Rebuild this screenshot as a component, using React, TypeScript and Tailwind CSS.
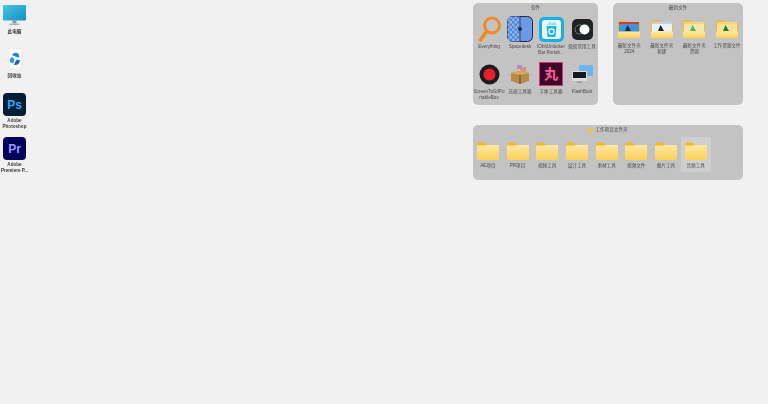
import React from 'react';

const font = { fontFamily: '"Liberation Sans", "Noto Sans CJK SC", sans-serif' };

const Label: React.FC<{ children: React.ReactNode; dark?: boolean }> = ({ children, dark }) => (
  <div className={`w-full text-center whitespace-nowrap overflow-hidden text-[4.6px] leading-[6px] blur-[0.35px] ${dark ? 'text-[#3a3a3a] font-bold' : 'text-[#4a4a4a]'}`}>
    {children}
  </div>
);

const Folder: React.FC<{ inner?: React.ReactNode }> = ({ inner }) => (
  <svg viewBox="0 0 22 18" className="w-[22px] h-[18px]">
    <path d="M0 3 Q0 0.5 2 0.5 H7 Q8 0.5 9 2 L10 3 H22 V17 Q22 18 21 18 H1 Q0 18 0 17 Z" fill="#f2b52c" />
    {inner}
    <path d="M0 3.5 H8 L10 3 H22 V17 Q22 18 21 18 H1 Q0 18 0 17 Z" fill="url(#folderFill)" opacity={inner ? 0 : 1} />
    {inner && <path d="M0 11.5 H22 V17 Q22 18 21 18 H1 Q0 18 0 17 Z" fill="url(#folderFill)" />}
  </svg>
);

const Cell: React.FC<{ icon: React.ReactNode; label: React.ReactNode; className: string }> = ({ icon, label, className }) => (
  <div className={`flex flex-col items-center ${className}`}>
    <div className="h-[26px] flex items-center justify-center">{icon}</div>
    <div className="mt-[2px] w-full">
      <Label>{label}</Label>
    </div>
  </div>
);

const Monitor = () => (
  <svg viewBox="0 0 23 21" className="w-[23px] h-[21px]">
    <defs>
      <linearGradient id="screen" x1="0" y1="0" x2="1" y2="1">
        <stop offset="0" stopColor="#45c8e0" />
        <stop offset="1" stopColor="#1a8cc4" />
      </linearGradient>
    </defs>
    <rect x="0" y="0" width="23" height="15.5" rx="1" fill="url(#screen)" />
    <rect x="9.5" y="15.5" width="4" height="3" fill="#8a97a0" />
    <rect x="6.5" y="18.5" width="10" height="1.5" rx="0.5" fill="#a7b0b6" />
  </svg>
);

const Recycle = () => (
  <svg viewBox="0 0 18 23" className="w-[18px] h-[23px]">
    <path d="M2 2 L5 1 L16 2 L16 21 Q16 22 15 22 H4 Q3 22 3 21 Z" fill="#f8f8f8" stroke="#dedede" strokeWidth="0.5" />
    <path d="M6 8 Q9 4 12.5 7 L13.5 10.5 L10.5 10 Z" fill="#1f86d8" />
    <path d="M4 15 Q3.5 11 6 10 L8.5 12.5 L7 16.5 Z" fill="#2a95e2" />
    <path d="M8 18 Q13 18.5 14 13.5 L11 12.5 L9 15.5 Z" fill="#1565b8" />
  </svg>
);

const AdobeIcon: React.FC<{ bg: string; fg: string; text: string }> = ({ bg, fg, text }) => (
  <div
    className="w-[23px] h-[23px] rounded-[4px] flex items-center justify-center text-[12px] font-bold leading-none"
    style={{ backgroundColor: bg, color: fg }}
  >
    {text}
  </div>
);

const Magnifier = () => (
  <svg viewBox="0 0 23 27" className="w-[23px] h-[27px]">
    <circle cx="14" cy="9.5" r="7.5" fill="none" stroke="#f08a24" strokeWidth="3" />
    <path d="M8.5 15.5 L2.5 24" stroke="#f08a24" strokeWidth="3.8" strokeLinecap="round" />
  </svg>
);

const SplitIcon = () => (
  <svg viewBox="0 0 26 26" className="w-[26px] h-[26px]">
    <defs>
      <pattern id="check" width="5" height="5" patternUnits="userSpaceOnUse">
        <rect width="5" height="5" fill="#8fb4ea" />
        <rect width="2.5" height="2.5" fill="#4f86d8" />
        <rect x="2.5" y="2.5" width="2.5" height="2.5" fill="#4f86d8" />
      </pattern>
    </defs>
    <rect x="0.5" y="0.5" width="25" height="25" rx="5" fill="#6b9be6" stroke="#1f2a44" />
    <path d="M5.5 0.5 H13 V25.5 H5.5 Q0.5 25.5 0.5 20.5 V5.5 Q0.5 0.5 5.5 0.5 Z" fill="url(#check)" />
    <rect x="12.6" y="0.5" width="0.8" height="25" fill="#1f2a44" />
    <circle cx="13" cy="13" r="2" fill="#1f2a44" />
  </svg>
);

const TrashApp = () => (
  <svg viewBox="0 0 25 25" className="w-[25px] h-[25px]">
    <rect width="25" height="25" rx="5" fill="#18aee6" />
    <rect x="3" y="3" width="19" height="19" rx="3" fill="#eaf8fd" />
    <path d="M7.5 9 H17.5 L16.5 20 H8.5 Z" fill="#22b4e8" />
    <path d="M8 8 L11 4.5 L13 6.5 L16 4.5 L17.5 8 Z" fill="#8edff5" />
    <circle cx="12.5" cy="14.5" r="2.6" fill="none" stroke="#fff" strokeWidth="1.1" />
  </svg>
);

const ToggleApp = () => (
  <svg viewBox="0 0 21 21" className="w-[21px] h-[21px]">
    <rect width="21" height="21" rx="5" fill="#1d2322" />
    <circle cx="7.5" cy="10.5" r="4.5" fill="none" stroke="#d8dcdc" strokeWidth="0.8" strokeDasharray="1 0.8" />
    <circle cx="12.5" cy="10.5" r="5" fill="#fff" />
  </svg>
);

const RecordApp = () => (
  <svg viewBox="0 0 21 21" className="w-[21px] h-[21px]">
    <circle cx="10.5" cy="10.5" r="10" fill="#1c1a1c" />
    <circle cx="10.5" cy="10.5" r="6" fill="#e8202a" />
  </svg>
);

const BoxApp = () => (
  <svg viewBox="0 0 20 20" className="w-[20px] h-[20px]">
    <rect x="7" y="1" width="5" height="5" fill="#b48ad0" />
    <rect x="11" y="3" width="5" height="5" fill="#d09a80" />
    <rect x="5" y="5" width="5" height="4" fill="#e0c090" />
    <path d="M1 9 L10 7 L19 9 V17 L10 20 L1 17 Z" fill="#b98a45" />
    <path d="M1 9 L10 11 L19 9 L10 7 Z" fill="#d6aa60" />
    <rect x="9" y="11" width="2" height="9" fill="#7a6a4a" />
  </svg>
);

const MonitorsApp = () => (
  <svg viewBox="0 0 21 20" className="w-[21px] h-[20px]">
    <rect x="7" y="1" width="14" height="11" rx="1.5" fill="#6eb4ec" />
    <rect x="0" y="7" width="15" height="10" rx="1" fill="#d8dde2" />
    <rect x="1" y="8" width="13" height="6" fill="#16181c" />
    <rect x="5" y="17" width="5" height="2" fill="#9aa3aa" />
  </svg>
);

const Panel: React.FC<{ title: React.ReactNode; className: string; children: React.ReactNode }> = ({ title, className, children }) => (
  <div className={`bg-[#c3c3c3] rounded-[5px] ${className}`}>
    <div className="h-[11px] flex items-center justify-center gap-[2px] text-[4.6px] text-[#4a4a4a] blur-[0.35px]">{title}</div>
    {children}
  </div>
);

const tools = [
  { icon: <Magnifier />, label: 'Everything' },
  { icon: <SplitIcon />, label: 'Spacedesk' },
  { icon: <TrashApp />, label: <>IObitUnlocker<br />Bar Portab...</> },
  { icon: <ToggleApp />, label: '微软常用工具' },
  { icon: <RecordApp />, label: <>ScreenToGifPo<br />rtableBox</> },
  { icon: <BoxApp />, label: '压缩工具箱' },
  { icon: <div className="w-[24px] h-[24px] bg-[#3c0a26] border border-[#e0307a] flex items-center justify-center text-[#ff5c9e] text-[14px] font-bold leading-none">丸</div>, label: '字体工具箱' },
  { icon: <MonitorsApp />, label: 'FlashBoot' },
];

const thumb = (colors: string[], mark: string) => (
  <g>
    <rect x="1" y="2" width="20" height="11" fill={colors[0]} />
    <rect x="1" y="2" width="20" height="2" fill={colors[1]} />
    <path d="M7 11 L9.5 5 L13 11 Z" fill={mark} />
  </g>
);

const recent = [
  { inner: thumb(['#3f95d8', '#c8402c'], '#1f2a44'), label: <>最新文件夹<br />2024</> },
  { inner: thumb(['#eef0f6', '#c9cfe8'], '#222222'), label: <>最新文件夹<br />新建</> },
  { inner: thumb(['#f6e7a8', '#f3d76f'], '#4fb36a'), label: <>最新文件夹<br />资源</> },
  { inner: thumb(['#f7e296', '#f3d76f'], '#1f7a3c'), label: '工作资源文件' },
];

const projects = ['AE项目', 'PR项目', '视频工具', '设计工具', '素材工具', '视频文件', '图片工具', '音频工具'];

export default function App() {
  return (
    <div className="w-[768px] h-[404px] bg-[#f1f1f1] overflow-hidden flex justify-between" style={font}>
      <svg width="0" height="0" className="absolute">
        <defs>
          <linearGradient id="folderFill" x1="0" y1="0" x2="0" y2="1">
            <stop offset="0" stopColor="#fde8a0" />
            <stop offset="1" stopColor="#fbcf58" />
          </linearGradient>
        </defs>
      </svg>

      {/* desktop shortcuts */}
      <div className="w-[29px] flex flex-col items-center pt-[5px]">
        <div className="h-[44px] w-full flex flex-col items-center">
          <Monitor />
          <div className="mt-[3px] w-full"><Label dark>此电脑</Label></div>
        </div>
        <div className="h-[44px] w-full flex flex-col items-center -mt-[2px]">
          <Recycle />
          <div className="mt-[3px] w-full"><Label dark>回收站</Label></div>
        </div>
        <div className="h-[44px] w-full flex flex-col items-center mt-[2px]">
          <AdobeIcon bg="#001e36" fg="#31a8ff" text="Ps" />
          <div className="mt-[2px] w-full"><Label dark>Adobe<br />Photoshop</Label></div>
        </div>
        <div className="h-[44px] w-full flex flex-col items-center">
          <AdobeIcon bg="#00005b" fg="#9999ff" text="Pr" />
          <div className="mt-[2px] w-full"><Label dark>Adobe<br />Premiere P...</Label></div>
        </div>
      </div>

      {/* folder groups */}
      <div className="w-[295px] pt-[3px] pr-[25px] flex flex-col gap-[20px]">
        <div className="flex justify-between">
          <Panel title="软件" className="w-[125px] h-[102px]">
            <div className="grid grid-cols-[repeat(4,31px)] pt-[2px] pl-[0.5px] gap-y-[1px]">
              {tools.map((tool, i) => (
                <Cell key={i} icon={tool.icon} label={tool.label} className="h-[44px]" />
              ))}
            </div>
          </Panel>
          <Panel title="最新文件" className="w-[130px] h-[102px]">
            <div className="grid grid-cols-4 pt-[6px]">
              {recent.map((item, i) => (
                <div key={i} className="flex flex-col items-center">
                  <Folder inner={item.inner} />
                  <div className="mt-[5px] w-full"><Label>{item.label}</Label></div>
                </div>
              ))}
            </div>
          </Panel>
        </div>
        <Panel
          title={<><span className="w-[5px] h-[5px] rounded-full bg-[#f5c33b]" />工作项目文件夹</>}
          className="w-[270px] h-[55px]"
        >
          <div className="flex h-[35px] items-start pt-[1px]">
            {projects.map((name, i) => (
              <div key={i} className={`w-[29.7px] h-[35px] flex flex-col items-center pt-[5px] ${i === 7 ? 'bg-[#cfcfcf]' : ''}`}>
                <Folder />
                <div className="mt-[3px] w-full"><Label>{name}</Label></div>
              </div>
            ))}
          </div>
        </Panel>
      </div>
    </div>
  );
}
